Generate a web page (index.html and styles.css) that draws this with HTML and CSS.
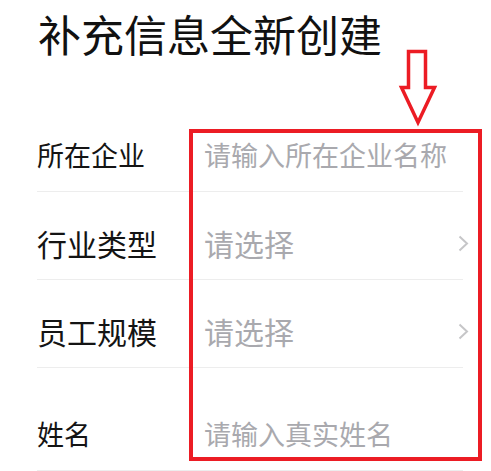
FILE: index.html
```html
<!DOCTYPE html>
<html lang="zh-CN">
<head>
<meta charset="utf-8">
<title>补充信息全新创建</title>
<link rel="stylesheet" href="styles.css">
</head>
<body>
<div class="page">
  <h1 class="title">补充信息全新创建</h1>
  <div class="form">
    <div class="row">
      <span class="label">所在企业</span>
      <span class="value">请输入所在企业名称</span>
    </div>
    <div class="row row-lg">
      <span class="label">行业类型</span>
      <span class="value">请选择</span>
      <span class="chev"><svg width="11" height="17" viewBox="0 0 11 17"><path d="M1.5 1.5 L9 8.5 L1.5 15.5" fill="none" stroke="#c6c6c8" stroke-width="2"/></svg></span>
    </div>
    <div class="row row-lg">
      <span class="label">员工规模</span>
      <span class="value">请选择</span>
      <span class="chev"><svg width="11" height="17" viewBox="0 0 11 17"><path d="M1.5 1.5 L9 8.5 L1.5 15.5" fill="none" stroke="#c6c6c8" stroke-width="2"/></svg></span>
    </div>
    <div class="row row-last">
      <span class="label">姓名</span>
      <span class="value">请输入真实姓名</span>
    </div>
  </div>
  <div class="mark-box"></div>
  <svg class="mark-arrow" width="44" height="82" viewBox="396 46 44 82">
    <polygon points="408.5,51.5 425.5,51.5 425.5,87.5 434.5,87.5 418,122.5 401.5,87.5 408.5,87.5" fill="none" stroke="#ec1c24" stroke-width="3.5" stroke-linejoin="miter"/>
  </svg>
</div>
</body>
</html>
```

FILE: styles.css
```css
html, body {
  margin: 0;
  padding: 0;
  background: #ffffff;
}

.page {
  position: relative;
  width: 491px;
  height: 471px;
  overflow: hidden;
  font-family: "Noto Sans CJK SC", "Noto Sans", sans-serif;
  color: #111111;
}

.title {
  margin: 12px 0 0 38px;
  font-size: 43px;
  line-height: 43px;
  font-weight: 400;
  letter-spacing: 0;
  height: 92px;
}

.form {
  padding: 0 28px 0 37px;
}

.row {
  display: flex;
  align-items: center;
  height: 88px;
  box-sizing: border-box;
  padding: 37px 0 23px;
  border-bottom: 1px solid #ededed;
  font-size: 27px;
  line-height: 27px;
}

.row-lg {
  font-size: 30px;
  line-height: 30px;
  padding: 36px 0 21px;
}

.row-last {
  height: 103px;
  padding-top: 52px;
}

.label {
  width: 167px;
  flex: none;
  color: #141414;
}

.value {
  flex: 1;
  color: #a9a9ae;
}

.chev {
  display: flex;
  margin-right: -6px;
}

.mark-box {
  position: absolute;
  left: 189px;
  top: 129px;
  width: 293px;
  height: 332px;
  box-sizing: border-box;
  border: 4px solid #ec1c24;
}

.mark-arrow {
  position: absolute;
  left: 396px;
  top: 46px;
}
```
